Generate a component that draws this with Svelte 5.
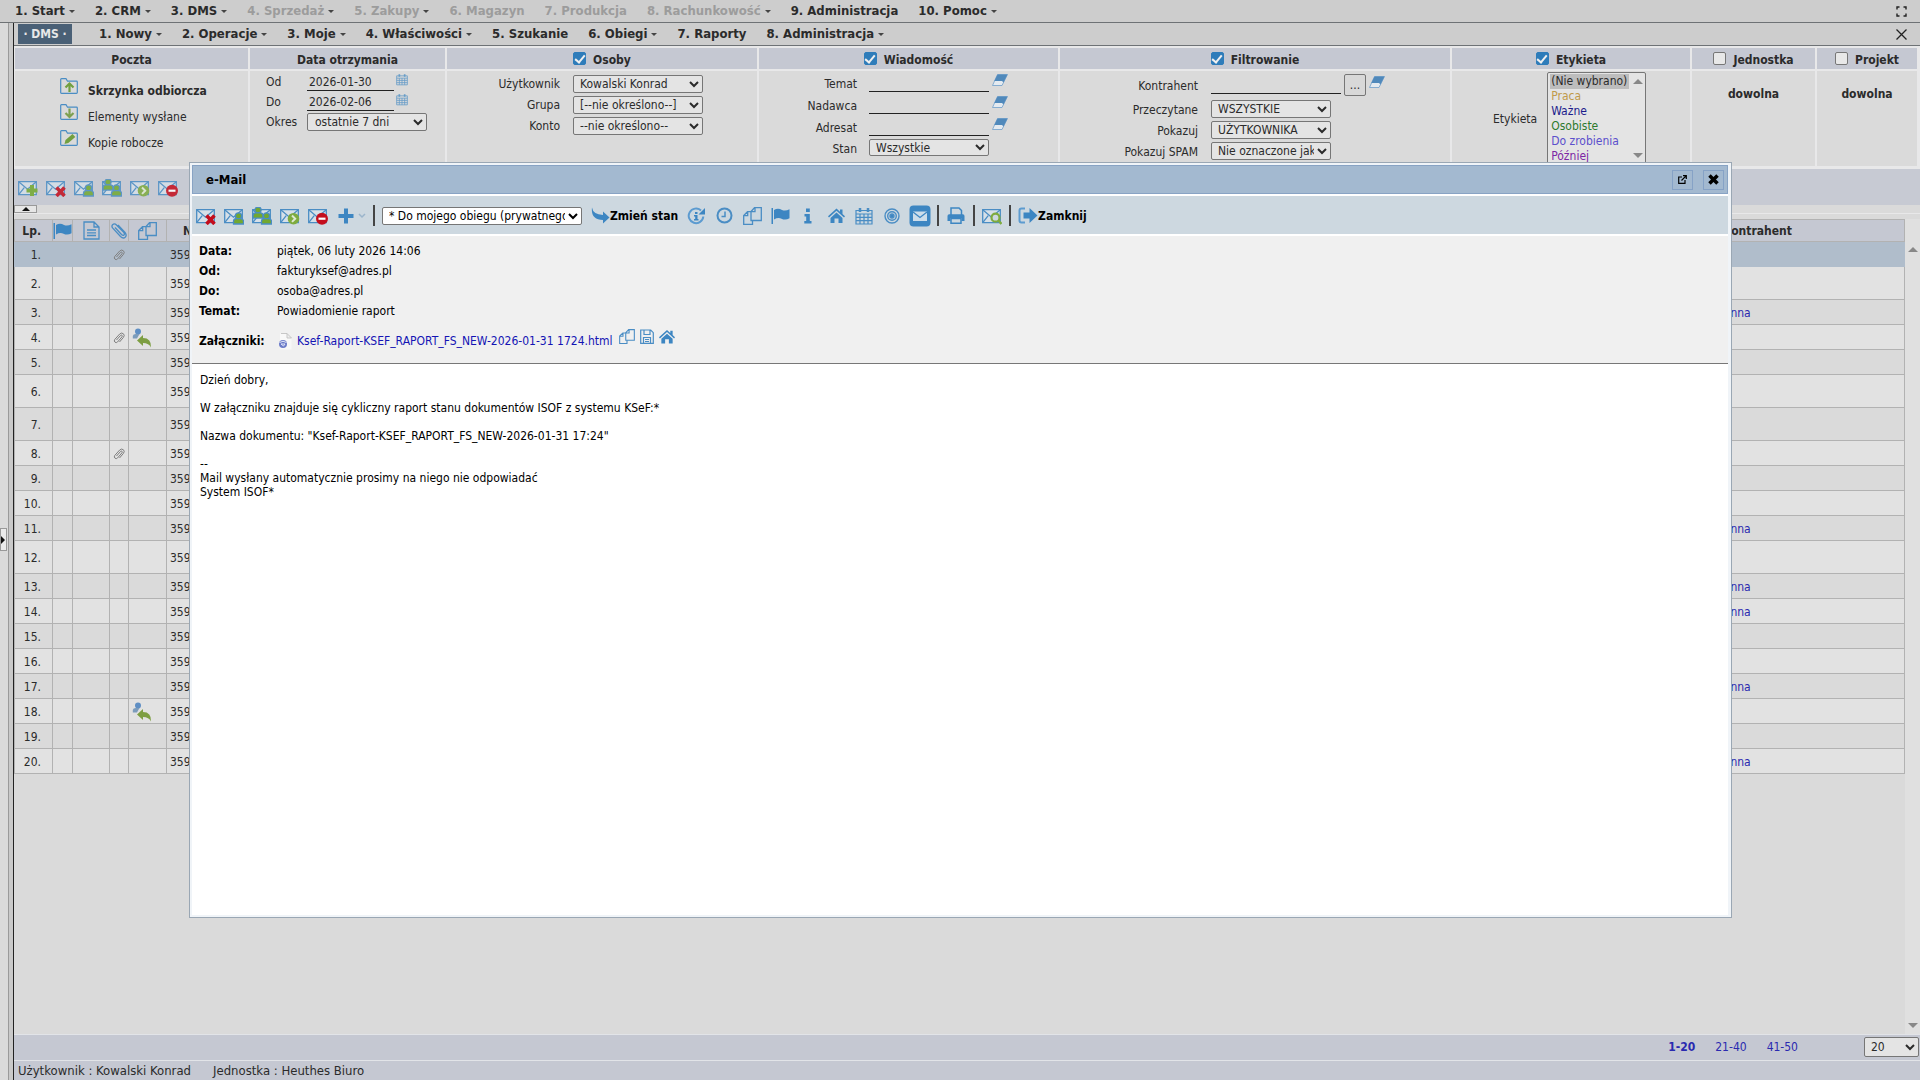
<script lang="ts">
  type MenuItem = { label: string; caret?: boolean; disabled?: boolean };
  type Row = { tall?: boolean; clip?: boolean; reply?: boolean; person?: boolean };

  const mainMenu: MenuItem[] = [
    { label: "1. Start", caret: true },
    { label: "2. CRM", caret: true },
    { label: "3. DMS", caret: true },
    { label: "4. Sprzedaż", caret: true, disabled: true },
    { label: "5. Zakupy", caret: true, disabled: true },
    { label: "6. Magazyn", disabled: true },
    { label: "7. Produkcja", disabled: true },
    { label: "8. Rachunkowość", caret: true, disabled: true },
    { label: "9. Administracja" },
    { label: "10. Pomoc", caret: true },
  ];

  const dmsMenu: MenuItem[] = [
    { label: "1. Nowy", caret: true },
    { label: "2. Operacje", caret: true },
    { label: "3. Moje", caret: true },
    { label: "4. Właściwości", caret: true },
    { label: "5. Szukanie" },
    { label: "6. Obiegi", caret: true },
    { label: "7. Raporty" },
    { label: "8. Administracja", caret: true },
  ];

  const folders = [
    { label: "Skrzynka odbiorcza", icon: "folder-up", active: true },
    { label: "Elementy wysłane", icon: "folder-down", active: false },
    { label: "Kopie robocze", icon: "folder-edit", active: false },
  ];

  const people = [
    { id: "user", label: "Użytkownik", value: "Kowalski Konrad" },
    { id: "group", label: "Grupa", value: "[--nie określono--]" },
    { id: "account", label: "Konto", value: "--nie określono--" },
  ];

  const messageFields = [
    { id: "subject", label: "Temat" },
    { id: "sender", label: "Nadawca" },
    { id: "recipient", label: "Adresat" },
  ];

  const filterFields = [
    { id: "read", label: "Przeczytane", value: "WSZYSTKIE" },
    { id: "show", label: "Pokazuj", value: "UŻYTKOWNIKA" },
    { id: "spam", label: "Pokazuj SPAM", value: "Nie oznaczone jako SPAM" },
  ];

  const listTools = [
    { icon: "mail-add", title: "Nowa wiadomość" },
    { icon: "mail-delete", title: "Usuń" },
    { icon: "mail-user", title: "Odpowiedz" },
    { icon: "mail-users", title: "Odpowiedz wszystkim" },
    { icon: "mail-forward", title: "Prześlij dalej" },
    { icon: "mail-block", title: "Oznacz jako SPAM" },
  ];

  const dialogTools = [
    { icon: "info-refresh", title: "Historia" },
    { icon: "clock", title: "Termin" },
    { icon: "copy", title: "Kopiuj" },
    { icon: "flag", title: "Flaga" },
    { icon: "info", title: "Informacje" },
    { icon: "home", title: "Kontrahent" },
    { icon: "calendar", title: "Kalendarz" },
    { icon: "target", title: "Cel" },
    { icon: "mail-box", title: "Wiadomość" },
  ];

  const rows: Row[] = [
    { clip: true },
    { tall: true },
    { person: true },
    { clip: true, reply: true },
    {},
    { tall: true },
    { tall: true },
    { clip: true },
    {},
    {},
    { person: true },
    { tall: true },
    { person: true },
    { person: true },
    {},
    {},
    { person: true },
    { reply: true },
    {},
    { person: true },
  ];

  const mail = [
    ["Data:", "piątek, 06 luty 2026 14:06"],
    ["Od:", "fakturyksef@adres.pl"],
    ["Do:", "osoba@adres.pl"],
    ["Temat:", "Powiadomienie raport"],
  ];

  let dateFrom = $state("2026-01-30");
  let dateTo = $state("2026-02-06");
  let open = $state(true);
</script>

{#snippet person(x: number, y: number)}
  <g fill="#72a82f">
    <circle cx={x} cy={y} r="3.1" />
    <path d="M{x - 5} {y + 8}v-2.5q0-2.500 2.500-2.800h5q2.500.3 2.500 2.800v2.500z" />
  </g>
{/snippet}

{#snippet icon(name: string)}
  {#if name.startsWith("mail-") && name !== "mail-box"}
    <svg width="20" height="18" viewBox="0 0 20 18" fill="none" stroke="#4a8dc4" stroke-width="1.300">
      <path d="M.7 2.700h17.600v13H.7z" fill="#d6e0e8" />
      <path d="M.7 2.700l8.800 7.500 8.800-7.500M.7 15.700l5.500-7" />
      {#if name === "mail-add"}
        <path d="M14 6v11M8.500 11.500h11" stroke="#72a82f" stroke-width="4" />
      {:else if name === "mail-delete"}
        <path d="M10.500 8.500l8 8.500M18.500 8.500l-8 8.500" stroke="#c40d1c" stroke-width="3.500" />
      {:else if name === "mail-user"}
        {@render person(14.5, 9)}
      {:else if name === "mail-users"}
        {@render person(6, 3.1)}
        {@render person(14.5, 9)}
      {:else if name === "mail-forward"}
        <circle cx="13.500" cy="11.700" r="5.800" fill="#7eab3e" stroke="none" />
        <path d="M12 8.500l3.200 3.200-3.200 3.200" stroke="#dfe9d2" stroke-width="2" />
      {:else if name === "mail-block"}
        <circle cx="14" cy="11.700" r="6" fill="#c40d1c" stroke="none" />
        <path d="M10.500 11.700h7" stroke="#fff" stroke-width="2.200" />
      {:else if name === "mail-search"}
        <circle cx="13.500" cy="10.700" r="4" fill="#cdd8e0" stroke="#7eab3e" stroke-width="2.200" />
        <path d="M16.500 13.500l3 3.500" stroke="#7eab3e" stroke-width="2.500" />
      {/if}
    </svg>
  {:else if name.startsWith("folder-")}
    <svg width="18" height="16" viewBox="0 0 18 16" fill="none" stroke="#4a8dc4" stroke-width="1.200">
      <path d="M.7 14.500V1.500q0-.8.8-.8h4.500l1.500 2.500h9q.8 0 .8.8v10.500q0 .8-.8.8H1.500q-.8 0-.8-.8z" />
      {#if name === "folder-up"}
        <path d="M9.500 14V7M5.500 9.500l4-4 4 4" stroke="#72a040" stroke-width="2.200" />
      {:else if name === "folder-down"}
        <path d="M9.500 4.500v7.500M5.500 9l4 4 4-4" stroke="#7da050" stroke-width="2.200" />
      {:else}
        <path d="M4.500 14l1-4 7-6 2.800 3-7 6z" fill="#72a040" stroke="none" />
      {/if}
    </svg>
  {:else if name === "calendar"}
    <svg width="18" height="18" viewBox="0 0 18 18" fill="none" stroke="#4a8dc4" stroke-width="1.200">
      <path d="M1 3.500h16v13.500H1zM1 7h16M1 10.300h16M1 13.700h16M5 7v10M9 7v10M13 7v10" />
      <path d="M5 1v4M13 1v4" stroke-width="2.500" />
    </svg>
  {:else if name === "eraser"}
    <svg width="16" height="12" viewBox="0 0 16 12">
      <path d="M5.500.5h10L10 11.500H.5z" fill="#e4eaf0" stroke="#6f9fca" stroke-width=".8" />
      <path d="M5.500.5h10L11.500 8.500l-1.500-1.500H2.300z" fill="#5089bb" />
    </svg>
  {:else if name === "flag"}
    <svg width="19" height="17" viewBox="0 0 19 17" fill="#3d86c2">
      <path d="M.5 1h1.500v16H.5zM3 3q4-2.500 8 0 3.500 1.500 7.500-.8v9q-4 2.500-8 .5-3.500-1.500-7.500.8z" />
    </svg>
  {:else if name === "document"}
    <svg width="17" height="19" viewBox="0 0 17 19" fill="none" stroke="#4a8dc4" stroke-width="1.300">
      <path d="M1 1h10l5 5v12H1zM11 1v5h5M4 9h9M4 11.800h9M4 14.500h9" />
    </svg>
  {:else if name === "clip"}
    <svg width="16" height="17" viewBox="0 0 16 17" fill="none" stroke="#4a8dc4" stroke-width="1.300">
      <path d="M4 5.500l6.500 7q1.500 1.500 2.500.5t-.3-2.600L5.500 3q-2-2-3.700-.5t0 3.700l7.700 8.300q2.700 2.500 4.700.7t-.2-4.700L7 3" />
    </svg>
  {:else if name === "clip-small"}
    <svg width="12" height="12" viewBox="0 0 12 12" fill="none" stroke="#7f7f7f">
      <path d="M3.500 8l4-4.500q.8-.8 1.500-.2t0 1.500L4.500 10q-1.200 1.200-2.500.2t-.3-2.700L6.700 2q1.800-1.700 3.600-.3t.2 3.600L6.500 10" />
    </svg>
  {:else if name === "copy"}
    <svg width="19" height="18" viewBox="0 0 19 18" fill="none" stroke="#4a8dc4" stroke-width="1.300">
      <path d="M8 13.500V4.500L11.500.7h6.800v12.800zM12 .7v4H8" />
      <path d="M8 4.700H4.500L.7 8.500v8.800H9.500v-3.800M4.700 4.700v4h-4" />
    </svg>
  {:else if name === "info-refresh"}
    <svg width="19" height="18" viewBox="0 0 19 18" fill="none" stroke="#5c9bd0" stroke-width="2">
      <path d="M14 3.500A7.300 7.300 0 1 0 16.300 9.500" />
      <path d="M11.500 7.500h6.500V1z" fill="#3d86c2" stroke="none" />
      <path d="M8 5h2.500v2H8zM7 8h3.500v4h1v1.500H7V12h1.200V9.500H7z" fill="#3d86c2" stroke="none" />
    </svg>
  {:else if name === "clock"}
    <svg width="17" height="17" viewBox="0 0 17 17" fill="none" stroke="#4a8dc4" stroke-width="2">
      <circle cx="8.500" cy="8.500" r="7" />
      <path d="M9 4.500v5H5.500" stroke-width="1.500" />
    </svg>
  {:else if name === "info"}
    <svg width="8" height="16" viewBox="0 0 8 16" fill="#3d86c2">
      <path d="M2 .5h3.800v3.500H2zM.5 6h5.300v7H7.500v2.500H.3V13h1.900V8.500H.5z" />
    </svg>
  {:else if name === "home"}
    <svg width="17" height="15" viewBox="0 0 17 15" fill="#3d86c2">
      <path d="M8.500.5L12 3.700V1.500h2.500v4.500L17 8.300l-1 1.200-7.500-6.700L1 9.500 0 8.300z" />
      <path d="M8.500 4.500l6 5.500v5h-4v-4.500h-4V15h-4v-5z" />
    </svg>
  {:else if name === "target"}
    <svg width="16" height="16" viewBox="0 0 16 16" fill="none" stroke="#4a8dc4" stroke-width="1.400">
      <circle cx="8" cy="8" r="7" />
      <circle cx="8" cy="8" r="4.300" />
      <circle cx="8" cy="8" r="2" fill="#3d86c2" />
    </svg>
  {:else if name === "mail-box"}
    <svg width="22" height="22" viewBox="0 0 22 22" fill="none">
      <rect x=".5" y=".5" width="21" height="21" rx="4" fill="#3d86c2" />
      <path d="M4 6.500h14v9.500H4z" fill="#cdddea" />
      <path d="M4 7l7 5.500L18 7" stroke="#3d86c2" stroke-width="1.300" />
    </svg>
  {:else if name === "print"}
    <svg width="18" height="17" viewBox="0 0 18 17" fill="none" stroke="#3d86c2" stroke-width="1.500">
      <path d="M4 8V1h8l2.500 2.500V8" />
      <path d="M.5 14V9q0-1.700 1.700-1.700h13.600q1.700 0 1.700 1.700v5h-3v-3h-11v3z" fill="#3d86c2" stroke="none" />
      <path d="M4 11.500h10v4.700H4z" />
    </svg>
  {:else if name === "exit"}
    <svg width="20" height="17" viewBox="0 0 20 17">
      <path d="M7 1.500H3.500Q1.500 1.500 1.500 3.500v10q0 2 2 2H7" fill="none" stroke="#5c9bd0" stroke-width="2" />
      <path d="M5.500 5.500h6V1L19.500 8.500l-8 7.500v-4.500h-6z" fill="#3d86c2" />
    </svg>
  {:else if name === "turn"}
    <svg width="19" height="17" viewBox="0 0 19 17">
      <path d="M1 .5q1 7 11 7.500V4.500l6.500 6-6.500 6V13Q-.5 12.500 1 .5z" fill="#3d86c2" />
    </svg>
  {:else if name === "plus"}
    <svg width="16" height="16" viewBox="0 0 16 16">
      <path d="M6 .5h4V6h5.500v4H10v5.500H6V10H.5V6H6z" fill="#3d86c2" />
    </svg>
  {:else if name === "chevron"}
    <svg width="8" height="6" viewBox="0 0 8 6" fill="none" stroke="#9bb5cc" stroke-width="1.500">
      <path d="M1 1l3 3 3-3" />
    </svg>
  {:else if name === "save"}
    <svg width="14" height="15" viewBox="0 0 14 15" fill="none" stroke="#4a8dc4" stroke-width="1.200">
      <path d="M.7 1h10L13.300 3.700V14.300H.7zM4 1v4.500h6V1M3.500 14V8.500h7V14M5 10.500h4M5 12.500h4" />
    </svg>
  {:else if name === "html-file"}
    <svg width="17" height="17" viewBox="0 0 17 17">
      <path d="M3 .5h7l4.500 4.500v11.500H3z" fill="#f8f8f8" />
      <path d="M4 .5h6l4.500 4.500H10V.5" fill="#eee" stroke="#bbb" stroke-width=".8" />
      <circle cx="6" cy="11" r="4" fill="#6c7cc8" />
      <path d="M2.500 9.500q3.500-2.500 7 0M4 11h4l-1.500 2z" fill="none" stroke="#dfe4f8" />
    </svg>
  {:else if name === "reply"}
    <svg width="20" height="20" viewBox="0 0 20 20">
      <circle cx="6" cy="3.500" r="3" fill="#5f8fc4" />
      <path d="M.8 10.500V8q.3-2 3-2h3.700L5 10.500z" fill="#7c9cbc" />
      <path d="M5 12.500l6-5.500v3q8.500 0 8 9.500-2-4.500-8-4.500v3z" fill="#7d9e42" />
    </svg>
  {/if}
{/snippet}

{#snippet menuItems(items: MenuItem[])}
  {#each items as item}
    <button class="menu-item" class:disabled={item.disabled} type="button">
      {item.label}
      {#if item.caret}<span class="caret"></span>{/if}
    </button>
  {/each}
{/snippet}

<div class="page">
  <nav class="menu main-menu">
    {@render menuItems(mainMenu)}
    <button class="corner" type="button" aria-label="Pełny ekran">
      <svg width="11" height="11" viewBox="0 0 11 11" fill="none" stroke="#222" stroke-width="1.400">
        <path d="M1 3.500V1h2.500M7.500 1H10v2.500M10 7.500V10H7.500M3.500 10H1V7.500" />
      </svg>
    </button>
  </nav>

  <div class="workspace">
    <aside class="side">
      <button class="side-toggle" type="button" aria-label="Rozwiń panel"></button>
    </aside>

    <main>
      <nav class="menu dms-menu">
        <button class="dms" type="button">· DMS ·</button>
        {@render menuItems(dmsMenu)}
        <button class="corner" type="button" aria-label="Zamknij moduł">
          <svg width="11" height="11" viewBox="0 0 11 11" stroke="#222" stroke-width="1.300">
            <path d="M.5.5l10 10M10.500.5l-10 10" />
          </svg>
        </button>
      </nav>

      <div class="filters">
        <section>
          <h2>Poczta</h2>
          <ul class="folders">
            {#each folders as folder}
              <li>
                {@render icon(folder.icon)}
                <a href="#{folder.icon}" class:active={folder.active}>{folder.label}</a>
              </li>
            {/each}
          </ul>
        </section>

        <section>
          <h2>Data otrzymania</h2>
          <div class="fields dates">
            <label for="date-from">Od</label>
            <div class="control">
              <input id="date-from" class="line" type="text" bind:value={dateFrom} />
              <button class="small-icon cal" type="button" aria-label="Kalendarz od">{@render icon("calendar")}</button>
            </div>
            <label for="date-to">Do</label>
            <div class="control">
              <input id="date-to" class="line" type="text" bind:value={dateTo} />
              <button class="small-icon cal" type="button" aria-label="Kalendarz do">{@render icon("calendar")}</button>
            </div>
            <label for="period">Okres</label>
            <select id="period"><option>ostatnie 7 dni</option></select>
          </div>
        </section>

        <section>
          <h2><input id="on-people" type="checkbox" checked /><label for="on-people">Osoby</label></h2>
          <div class="fields people">
            {#each people as field}
              <label for={field.id}>{field.label}</label>
              <select id={field.id}><option>{field.value}</option></select>
            {/each}
          </div>
        </section>

        <section>
          <h2><input id="on-message" type="checkbox" checked /><label for="on-message">Wiadomość</label></h2>
          <div class="fields message">
            {#each messageFields as field}
              <label for={field.id}>{field.label}</label>
              <div class="control">
                <input id={field.id} class="line" type="text" />
                <button class="small-icon" type="button" aria-label="Wyczyść">{@render icon("eraser")}</button>
              </div>
            {/each}
            <label for="state">Stan</label>
            <select id="state"><option>Wszystkie</option></select>
          </div>
        </section>

        <section>
          <h2><input id="on-filter" type="checkbox" checked /><label for="on-filter">Filtrowanie</label></h2>
          <div class="fields filtering">
            <label for="client">Kontrahent</label>
            <div class="control">
              <input id="client" class="line" type="text" />
              <button class="dots" type="button">...</button>
              <button class="small-icon" type="button" aria-label="Wyczyść kontrahenta">{@render icon("eraser")}</button>
            </div>
            {#each filterFields as field}
              <label for={field.id}>{field.label}</label>
              <select id={field.id}><option>{field.value}</option></select>
            {/each}
          </div>
        </section>

        <section>
          <h2><input id="on-label" type="checkbox" checked /><label for="on-label">Etykieta</label></h2>
          <div class="labels">
            <label for="labels">Etykieta</label>
            <div class="listbox">
              <select id="labels" size="6">
                <option class="none">(Nie wybrano)</option>
                <option class="work">Praca</option>
                <option class="important">Ważne</option>
                <option class="personal">Osobiste</option>
                <option class="todo">Do zrobienia</option>
                <option class="later">Później</option>
              </select>
              <span class="arrow up"></span>
              <span class="arrow down"></span>
            </div>
          </div>
        </section>

        <section>
          <h2><input id="on-unit" type="checkbox" /><label for="on-unit">Jednostka</label></h2>
          <p class="any">dowolna</p>
        </section>

        <section>
          <h2><input id="on-project" type="checkbox" /><label for="on-project">Projekt</label></h2>
          <p class="any">dowolna</p>
        </section>
      </div>

      <div class="toolbar">
        {#each listTools as tool}
          <button class="tool" type="button" aria-label={tool.title}>{@render icon(tool.icon)}</button>
        {/each}
      </div>

      <button class="fold" type="button" aria-label="Zwiń filtry"><span></span></button>

      <div class="list">
        <table>
          <colgroup>
            <col class="c-no" /><col class="c-flag" /><col class="c-doc" /><col class="c-clip" />
            <col class="c-copy" /><col class="c-nr" /><col /><col class="c-client" />
          </colgroup>
          <thead>
            <tr>
              <th class="no">Lp.</th>
              <th>{@render icon("flag")}</th>
              <th>{@render icon("document")}</th>
              <th>{@render icon("clip")}</th>
              <th>{@render icon("copy")}</th>
              <th class="nr">Nr</th>
              <th></th>
              <th class="client">Kontrahent</th>
            </tr>
          </thead>
          <tbody>
            {#each rows as row, i}
              <tr class:tall={row.tall} class:selected={i === 0}>
                <td class="no">{i + 1}.</td>
                <td></td>
                <td></td>
                <td class="mark">{#if row.clip}{@render icon("clip-small")}{/if}</td>
                <td class="reply">{#if row.reply}{@render icon("reply")}{/if}</td>
                <td class="nr">359</td>
                <td></td>
                <td class="client">{#if row.person}<a href="#osoba">Anna</a>{/if}</td>
              </tr>
            {/each}
          </tbody>
        </table>
        <div class="scroll"><span class="arrow"></span><span class="arrow flip"></span></div>
      </div>

      <div class="pager">
        <a class="current" href="#1-20">1-20</a>
        <a href="#21-40">21-40</a>
        <a href="#41-50">41-50</a>
        <select aria-label="Liczba wierszy"><option>20</option></select>
      </div>

      <footer>
        <span>Użytkownik : Kowalski Konrad</span>
        <span>Jednostka : Heuthes Biuro</span>
      </footer>
    </main>
  </div>

  {#if open}
    <div class="dialog" role="dialog" aria-labelledby="dialog-title">
      <header class="title-bar">
        <h1 id="dialog-title">e-Mail</h1>
        <button type="button" aria-label="Otwórz w nowym oknie">
          <svg width="9" height="9" viewBox="0 0 9 9" fill="none" stroke="#000" stroke-width="1.200">
            <path d="M4 2H.7v6.300H7V5M5 .7h3.300V4M8.300.7L3.500 5.500" />
          </svg>
        </button>
        <button type="button" aria-label="Zamknij okno" onclick={() => (open = false)}>
          <svg width="11" height="11" viewBox="0 0 11 11" stroke="#000" stroke-width="3.500">
            <path d="M1.500 1.500l8 8M9.500 1.500l-8 8" />
          </svg>
        </button>
      </header>

      <div class="dialog-tools">
        {#each listTools.slice(1) as tool}
          <button class="tool" type="button" aria-label={tool.title}>{@render icon(tool.icon)}</button>
        {/each}
        <button class="add" type="button" aria-label="Dodaj">
          {@render icon("plus")}
          {@render icon("chevron")}
        </button>
        <span class="sep"></span>
        <select class="flow" aria-label="Obieg"><option>* Do mojego obiegu (prywatnego)</option></select>
        <button class="text-tool" type="button">{@render icon("turn")}Zmień stan</button>
        {#each dialogTools as tool}
          <button class="tool center" type="button" aria-label={tool.title}>{@render icon(tool.icon)}</button>
        {/each}
        <span class="sep near"></span>
        <button class="tool center wide" type="button" aria-label="Drukuj">{@render icon("print")}</button>
        <span class="sep"></span>
        <button class="tool center wide" type="button" aria-label="Podgląd">{@render icon("mail-search")}</button>
        <span class="sep"></span>
        <button class="text-tool" type="button" onclick={() => (open = false)}>{@render icon("exit")}Zamknij</button>
      </div>

      <dl class="meta">
        {#each mail as [name, value]}
          <dt>{name}</dt>
          <dd>{value}</dd>
        {/each}
        <dt class="files">Załączniki:</dt>
        <dd class="files">
          {@render icon("html-file")}
          <a href="#raport">Ksef-Raport-KSEF_RAPORT_FS_NEW-2026-01-31 1724.html</a>
          <span class="file-tools">
            <button type="button" aria-label="Kopiuj załącznik">{@render icon("copy")}</button>
            <button type="button" aria-label="Zapisz załącznik">{@render icon("save")}</button>
            <button type="button" aria-label="Przypisz załącznik">{@render icon("home")}</button>
          </span>
        </dd>
      </dl>

      <div class="message-body">
        <p>Dzień dobry,</p>
        <p>W załączniku znajduje się cykliczny raport stanu dokumentów ISOF z systemu KSeF:*</p>
        <p>Nazwa dokumentu: "Ksef-Raport-KSEF_RAPORT_FS_NEW-2026-01-31 17:24"</p>
        <p>--<br />Mail wysłany automatycznie prosimy na niego nie odpowiadać<br />System ISOF*</p>
      </div>
    </div>
  {/if}
</div>

<style>
  :global(body) {
    background: #dadada;
  }

  .page {
    min-height: 100vh;
    display: flex;
    flex-direction: column;
    font-family: "DejaVu Sans Condensed", "Noto Sans", sans-serif;
    font-size: 12px;
    line-height: 14px;
    color: #2b2b2b;
  }

  .page *,
  .page {
    box-sizing: border-box;
  }

  button {
    padding: 0;
    border: 0;
    background: none;
    font: inherit;
    color: inherit;
    cursor: pointer;
  }

  svg {
    display: block;
    flex: none;
  }

  h1,
  h2,
  p,
  ul,
  dl,
  dd {
    margin: 0;
    padding: 0;
  }

  select {
    height: 18px;
    padding: 0 0 0 2px;
    border: 1px solid #767676;
    border-radius: 2px;
    background-color: #e4e4e4;
    font: inherit;
    color: inherit;
  }

  a {
    color: #2a2ab0;
    text-decoration: none;
  }

  .menu {
    height: 23px;
    flex: none;
    display: flex;
    align-items: center;
    gap: 20px;
    padding: 0 13px 0 15px;
    background: #cdcdcd;
    border-bottom: 1px solid #6e7275;
    font-size: 13px;
    font-weight: bold;
  }

  .menu-item {
    display: flex;
    align-items: center;
    gap: 4px;
    white-space: nowrap;
  }

  .menu-item.disabled {
    color: #9c9c9c;
  }

  .caret {
    border: 3px solid transparent;
    border-top-color: #444;
    border-bottom: 0;
  }

  .corner {
    margin-left: auto;
  }

  .workspace {
    flex: 1;
    display: flex;
  }

  .side {
    width: 14px;
    flex: none;
    display: flex;
    align-items: center;
    background: linear-gradient(to right, #dadada 8px, #9a9a9a 8px, #9a9a9a 9px, #c9c9c9 9px);
    border-right: 1px solid #222;
  }

  .side-toggle {
    width: 7px;
    height: 23px;
    margin-bottom: 24px;
    display: flex;
    align-items: center;
    background: #ebebeb;
    border: 1px solid #999;
  }

  .side-toggle::before {
    content: "";
    border: 4px solid transparent;
    border-left-color: #111;
    border-right: 0;
  }

  main {
    flex: 1;
    min-width: 0;
    display: flex;
    flex-direction: column;
  }

  .dms-menu {
    padding-left: 4px;
  }

  .dms {
    width: 54px;
    height: 20px;
    margin-right: 7px;
    background: #4a6076;
    color: #e8e8e8;
    font-size: 12px;
  }

  .filters {
    display: grid;
    grid-template-columns: 233fr 195fr 310fr 299fr 390fr 238fr 123fr 100fr;
    gap: 2px;
    padding: 2px 3px 3px 1px;
    background: #e8e8e9;
  }

  .filters section {
    min-width: 0;
    height: 118px;
    background: #dadada;
  }

  h2 {
    height: 23px;
    display: flex;
    align-items: center;
    justify-content: center;
    gap: 7px;
    padding-top: 2px;
    background: #c5c8d2;
    border-bottom: 2px solid #e8e8e9;
    font-size: 12px;
  }

  h2 input {
    appearance: none;
    width: 13px;
    height: 13px;
    margin: 0 0 3px;
    border: 1px solid #777;
    border-radius: 2px;
    background: #e8e8e8;
  }

  h2 input:checked {
    border-color: #2e7cba;
    background: #2e7cba;
    display: grid;
    place-items: center;
  }

  h2 input:checked::before {
    content: "";
    width: 4px;
    height: 8px;
    margin-bottom: 2px;
    border: solid #f0f0f0;
    border-width: 0 2px 2px 0;
    rotate: 40deg;
  }

  .folders {
    padding: 7px 0 0 45px;
    list-style: none;
  }

  .folders li {
    height: 26px;
    display: flex;
    align-items: flex-start;
    gap: 10px;
  }

  .folders a {
    padding-top: 6px;
    color: inherit;
  }

  .folders a.active {
    font-weight: bold;
  }

  .fields {
    display: grid;
    align-items: center;
    justify-content: start;
  }

  .people label,
  .message label,
  .filtering label {
    text-align: right;
  }

  .control {
    display: flex;
    align-items: center;
    gap: 3px;
  }

  .line {
    width: 100%;
    height: 17px;
    padding: 0 2px;
    border: 0;
    border-bottom: 1px solid #222;
    background: transparent;
    font: inherit;
    color: inherit;
  }

  .small-icon {
    margin-bottom: 6px;
  }

  .cal :global(svg) {
    width: 12px;
    height: 13px;
    opacity: 0.8;
  }

  .dates {
    grid-template-columns: 41px 120px;
    grid-auto-rows: 20px;
    padding: 1px 0 0 16px;
  }

  .dates .line {
    width: 87px;
  }

  .dates .control {
    gap: 2px;
  }

  .dates select {
    padding-left: 3px;
  }

  .people {
    grid-template-columns: 113px 130px;
    grid-auto-rows: 21px;
    gap: 0 13px;
    padding-top: 2px;
  }

  .message {
    grid-template-columns: 98px 120px;
    grid-template-rows: repeat(3, 22px) 19px;
    gap: 0 12px;
    padding-top: 1px;
  }

  .message .control,
  .filtering .control {
    width: max-content;
  }

  .message label,
  .filtering label {
    padding-top: 2px;
  }

  .message .line {
    width: 120px;
  }

  .message select {
    height: 17px;
  }

  .filtering {
    grid-template-columns: 138px 120px;
    grid-template-rows: 26px;
    grid-auto-rows: 21px;
    gap: 0 13px;
    padding-top: 1px;
  }

  .filtering .line {
    width: 130px;
  }

  .dots {
    width: 22px;
    height: 22px;
    border: 1px solid #767676;
    border-radius: 2px;
    background: #d8d8d8;
  }

  .labels {
    display: flex;
    align-items: center;
    gap: 10px;
    padding: 1px 0 0 41px;
  }

  .listbox {
    position: relative;
  }

  .listbox select {
    width: 99px;
    height: 94px;
    padding: 1px 2px;
    overflow: hidden;
    scrollbar-width: none;
  }

  .listbox option {
    width: 79px;
    min-height: 15px;
    padding: 0 1px;
    line-height: 15px;
  }

  .none {
    background: #bdbdbd;
  }

  .work {
    color: #c09a4a;
  }

  .important {
    color: #1c1c8c;
  }

  .personal {
    color: #2e7a2e;
  }

  .todo {
    color: #5b50cc;
  }

  .later {
    color: #7d26a5;
  }

  .arrow {
    border: 5px solid transparent;
    border-bottom-color: #888;
    border-top: 0;
  }

  .listbox .arrow {
    position: absolute;
    right: 3px;
  }

  .up {
    top: 7px;
  }

  .down {
    bottom: 8px;
    rotate: 180deg;
  }

  .any {
    padding-top: 16px;
    text-align: center;
    font-weight: bold;
  }

  .toolbar {
    height: 36px;
    display: flex;
    align-items: center;
    padding: 2px 0 0 4px;
    background: #c7cad3;
  }

  .tool {
    width: 28px;
    height: 20px;
    display: flex;
    align-items: center;
  }

  .toolbar .tool {
    opacity: 0.85;
  }

  .fold {
    width: 23px;
    height: 8px;
    display: grid;
    place-items: center;
    border: 1px solid #999;
    background: #e6e6e6;
  }

  .fold span {
    border: 4px solid transparent;
    border-bottom-color: #111;
    border-top: 0;
  }

  .list {
    flex: 1;
    display: flex;
    padding-top: 5px;
    border-top: 1px solid #e8e8e9;
  }

  table {
    flex: 1;
    align-self: flex-start;
    table-layout: fixed;
    border-collapse: collapse;
  }

  .c-no {
    width: 38px;
  }

  .c-flag,
  .c-clip {
    width: 19px;
  }

  .c-doc {
    width: 37px;
  }

  .c-copy {
    width: 38px;
  }

  .c-nr {
    width: 60px;
  }

  .c-client {
    width: 190px;
  }

  th,
  td {
    height: 25px;
    padding: 1px 0 0;
    border: 1px solid #b2b2b2;
    font-size: 12px;
  }

  th {
    height: 22px;
    padding-top: 0;
    background: #c5c8d2;
  }

  th :global(svg),
  td :global(svg) {
    margin: auto;
  }

  tbody tr {
    background: #dadada;
  }

  tbody tr:nth-child(even) {
    background: #e2e2e2;
  }

  tbody .selected {
    background: #b0bdcb;
  }

  .selected td {
    border-color: #b0bdcb;
  }

  .tall td {
    height: 33px;
  }

  .no {
    padding-right: 11px;
    text-align: right;
  }

  th.nr {
    padding-left: 16px;
    text-align: left;
  }

  td.nr {
    padding-left: 3px;
  }

  .client {
    padding-left: 8px;
    text-align: left;
  }

  .reply :global(svg) {
    margin-left: 3px;
  }

  .scroll {
    width: 15px;
    display: flex;
    flex-direction: column;
    align-items: center;
    justify-content: space-between;
    padding: 28px 0 6px;
    background: #e0e0e0;
  }

  .flip {
    rotate: 180deg;
  }

  .pager {
    height: 26px;
    display: flex;
    align-items: center;
    justify-content: flex-end;
    gap: 20px;
    padding: 0 1px 2px 0;
    border-top: 1px solid #e2e4e8;
    background: #c5c8d2;
  }

  .pager .current {
    font-weight: bold;
  }

  .pager select {
    width: 55px;
    height: 20px;
    margin-left: 46px;
  }

  footer {
    height: 20px;
    display: flex;
    align-items: center;
    gap: 22px;
    padding-left: 4px;
    border-top: 1px solid #e2e4e8;
    background: #c5c8d2;
    font-size: 13px;
  }

  .dialog {
    position: fixed;
    inset: 162px 188px 162px 189px;
    display: flex;
    flex-direction: column;
    padding: 2px 3px 2px 2px;
    border: 1px solid #9aa7b4;
    background: #f0f4f8;
    color: #000;
  }

  .title-bar {
    height: 29px;
    flex: none;
    display: flex;
    align-items: center;
    gap: 10px;
    padding: 0 3px 0 13px;
    border: 1px solid #88a3c4;
    background: #a3b9d0;
  }

  .title-bar h1 {
    flex: 1;
    font-size: 13px;
  }

  .title-bar button {
    width: 21px;
    height: 20px;
    display: grid;
    place-items: center;
    border: 1px solid #86a2c6;
  }

  .dialog-tools {
    height: 42px;
    flex: none;
    display: flex;
    align-items: center;
    padding: 1px 0 0 4px;
    border: solid #fff;
    border-width: 2px 0;
    background: #cdd8e0;
  }

  .center {
    justify-content: center;
  }

  .wide {
    width: 34px;
  }

  .add {
    display: flex;
    align-items: center;
    gap: 4px;
    margin: 0 7px 0 2px;
  }

  .sep {
    width: 2px;
    height: 21px;
    background: #444;
  }

  .near {
    margin-left: 3px;
  }

  .flow {
    width: 200px;
    margin: 0 9px 0 7px;
    background-color: #fff;
  }

  .text-tool {
    display: flex;
    align-items: center;
    margin-right: 4px;
    font-size: 12px;
    font-weight: bold;
  }

  .sep + .text-tool {
    margin-left: 7px;
  }

  .meta {
    height: 128px;
    flex: none;
    display: grid;
    grid-template-columns: 78px 1fr;
    grid-auto-rows: 20px;
    align-items: center;
    padding: 5px 0 0 7px;
    border-bottom: 1px solid #777;
    background: #f0f0f0;
  }

  .meta dt {
    font-weight: bold;
  }

  .files {
    margin-top: 20px;
  }

  dd.files {
    display: flex;
    align-items: center;
    gap: 3px;
  }

  .meta a {
    color: #1414b4;
  }

  .file-tools {
    display: flex;
    gap: 4px;
    margin: 0 0 9px 3px;
  }

  .file-tools :global(svg) {
    height: 15px;
    width: 16px;
  }

  .message-body {
    flex: 1;
    padding: 9px 8px;
    background: #fff;
  }

  .message-body p {
    margin-bottom: 14px;
  }
</style>
